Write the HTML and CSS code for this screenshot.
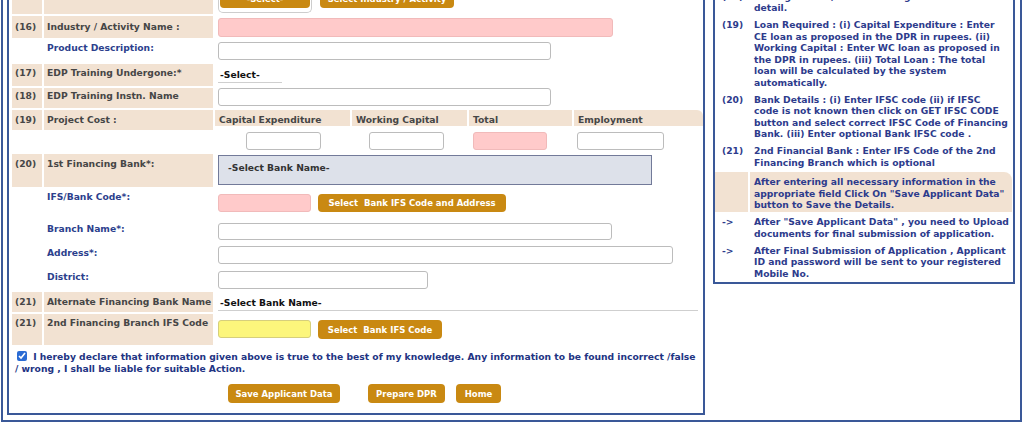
FILE: index.html
```html
<!DOCTYPE html>
<html lang="en">
<head>
    <meta charset="UTF-8">
    <meta name="viewport" content="width=device-width, initial-scale=1.0">
    <title>Applicant Data</title>
    <link rel="stylesheet" href="styles.css">
</head>
<body>
    <div class="frame">
        <!-- Form kiri -->
        <div class="form-panel">
            <div class="row row-top">
                <div class="num shade"></div>
                <div class="label shade"></div>
                <div class="field">
                    <span class="select-wrap"><button class="btn btn-select">-Select-</button></span>
                    <button class="btn btn-activity">Select Industry / Activity</button>
                </div>
            </div>

            <div class="row row-industry">
                <div class="num shade">(16)</div>
                <div class="label shade">Industry / Activity Name :</div>
                <div class="field"><input type="text" class="input input-pink w-industry"></div>
            </div>

            <div class="row row-desc">
                <div class="num"></div>
                <div class="label label-blue">Product Description:</div>
                <div class="field"><input type="text" class="input w-desc"></div>
            </div>

            <div class="row row-edp">
                <div class="num shade">(17)</div>
                <div class="label shade">EDP Training Undergone:*</div>
                <div class="field"><span class="select-plain">-Select-</span></div>
            </div>

            <div class="row row-instn">
                <div class="num shade">(18)</div>
                <div class="label shade">EDP Training Instn. Name</div>
                <div class="field"><input type="text" class="input w-desc"></div>
            </div>

            <div class="row row-cost">
                <div class="num shade">(19)</div>
                <div class="label shade">Project Cost :</div>
                <div class="field cost-grid">
                    <div class="cost-head">Capital Expenditure</div>
                    <div class="cost-head">Working Capital</div>
                    <div class="cost-head">Total</div>
                    <div class="cost-head cost-last">Employment</div>
                </div>
            </div>

            <div class="row row-cost-input">
                <div class="num"></div>
                <div class="label"></div>
                <div class="field cost-grid">
                    <input type="text" class="input cost-ce">
                    <input type="text" class="input cost-wc">
                    <input type="text" class="input input-pink cost-total">
                    <input type="text" class="input cost-emp">
                </div>
            </div>

            <div class="row row-bank">
                <div class="num shade">(20)</div>
                <div class="label shade">1st Financing Bank*:</div>
                <div class="field"><div class="select-box">-Select Bank Name-</div></div>
            </div>

            <div class="row row-ifs">
                <div class="num"></div>
                <div class="label label-blue">IFS/Bank Code*:</div>
                <div class="field">
                    <input type="text" class="input input-pink w-code">
                    <button class="btn btn-ifs-address">Select&nbsp; Bank IFS Code and Address</button>
                </div>
            </div>

            <div class="row row-branch">
                <div class="num"></div>
                <div class="label label-blue">Branch Name*:</div>
                <div class="field"><input type="text" class="input w-branch"></div>
            </div>

            <div class="row row-address">
                <div class="num"></div>
                <div class="label label-blue">Address*:</div>
                <div class="field"><input type="text" class="input w-address"></div>
            </div>

            <div class="row row-district">
                <div class="num"></div>
                <div class="label label-blue">District:</div>
                <div class="field"><input type="text" class="input w-district"></div>
            </div>

            <div class="row row-alt">
                <div class="num shade">(21)</div>
                <div class="label shade">Alternate Financing Bank Name</div>
                <div class="field"><span class="select-plain select-line">-Select Bank Name-</span></div>
            </div>

            <div class="row row-second">
                <div class="num shade">(21)</div>
                <div class="label shade">2nd Financing Branch IFS Code</div>
                <div class="field">
                    <input type="text" class="input input-yellow w-code">
                    <button class="btn btn-ifs">Select&nbsp; Bank IFS Code</button>
                </div>
            </div>

            <p class="declare">
                <input type="checkbox" checked> I hereby declare that information given above is true to the best of my knowledge. Any information to be found incorrect /false<br>/ wrong , I shall be liable for suitable Action.
            </p>

            <div class="actions">
                <button class="btn btn-save">Save Applicant Data</button>
                <button class="btn btn-dpr">Prepare DPR</button>
                <button class="btn btn-home">Home</button>
            </div>
        </div>

        <!-- Petunjuk kanan -->
        <div class="info-panel">
            <div class="info-num">(18)</div>
            <div class="info-text">undergone Yes, enter Training Institute Name in<br>detail.</div>

            <div class="info-num">(19)</div>
            <div class="info-text">Loan Required : (i) Capital Expenditure : Enter<br>CE loan as proposed in the DPR in rupees. (ii)<br>Working Capital : Enter WC loan as proposed in<br>the DPR in rupees. (iii) Total Loan : The total<br>loan will be calculated by the system<br>automatically.</div>

            <div class="info-num">(20)</div>
            <div class="info-text">Bank Details : (i) Enter IFSC code (ii) if IFSC<br>code is not known then click on GET IFSC CODE<br>button and select correct IFSC Code of Financing<br>Bank. (iii) Enter optional Bank IFSC code .</div>

            <div class="info-num">(21)</div>
            <div class="info-text">2nd Financial Bank : Enter IFS Code of the 2nd<br>Financing Branch which is optional</div>

            <div class="info-num info-shade"></div>
            <div class="info-text info-shade info-shade-end">After entering all necessary information in the<br>appropriate field Click On "Save Applicant Data"<br>button to Save the Details.</div>

            <div class="info-num">-&gt;</div>
            <div class="info-text">After "Save Applicant Data" , you need to Upload<br>documents for final submission of application.</div>

            <div class="info-num">-&gt;</div>
            <div class="info-text">After Final Submission of Application , Applicant<br>ID and password will be sent to your registered<br>Mobile No.</div>
        </div>
    </div>
</body>
</html>
```

FILE: styles.css
```css
/* Reset */
* {
    margin: 0;
    padding: 0;
    box-sizing: border-box;
}

body {
    font-family: "DejaVu Sans", Verdana, sans-serif;
    font-size: 9.2px;
    font-weight: bold;
    color: #464646;
    background: #fff;
    overflow: hidden;
}

/* Bingkai luar */
.frame {
    display: flex;
    align-items: flex-start;
    gap: 8px;
    width: 1021px;
    margin: -30px 0 0 1px;
    padding: 4px 5px 5px 4px;
    border: 2px solid #3a5898;
}

.form-panel {
    width: 698px;
    display: flex;
    flex-direction: column;
    gap: 2px;
    padding: 10px 0 10px 3px;
    border: 2px solid #3a5898;
}

/* Baris form */
.row {
    --lp: 3px;
    --fp: 2px;
    display: grid;
    grid-template-columns: 30px 169px 1fr;
    column-gap: 2px;
    height: 22px;
    line-height: 12px;
}

.num,
.label {
    padding: var(--lp) 0 0 3px;
    white-space: nowrap;
}

.field {
    display: flex;
    align-items: flex-start;
    gap: 7px;
    padding: var(--fp) 0 0 3px;
}

.shade {
    background: #f2e2d2;
}

.label-blue {
    color: #2c3f8d;
}

.row-top { height: 26px; --fp: 0px; gap: 2px 2px; }
.row-industry { --lp: 5px; }
.row-desc { --lp: 2px; }
.row-edp { --fp: 4px; }
.row-instn { height: 20px; --lp: 2px; --fp: 0px; }
.row-cost { height: 20px; --lp: 3.5px; }
.row-cost-input { height: 20px; }
.row-bank { height: 33px; --lp: 4px; --fp: 1px; }
.row-ifs { height: 28px; --lp: 2px; --fp: 5px; }
.row-branch { height: 23px; --lp: 4px; --fp: 4px; }
.row-district { --fp: 3px; }
.row-alt { height: 20px; --lp: 4px; --fp: 4px; }
.row-second { height: 31px; --fp: 6px; }

/* Isian */
.input {
    display: block;
    height: 18px;
    font: inherit;
    background: #fff;
    border: 1px solid #bcbcbc;
    border-radius: 3px;
}

.input-pink {
    background: #ffcaca;
    border-color: #f1baba;
}

.input-yellow {
    background: #fcf67c;
    border-color: #d6cf7c;
}

.w-industry { width: 395px; height: 19px; }
.w-desc { width: 333px; }
.w-code { width: 93px; }
.w-branch { width: 394px; height: 17px; }
.w-address { width: 455px; }
.w-district { width: 210px; }

.select-plain {
    display: block;
    width: 64px;
    height: 15px;
    padding-left: 2px;
    line-height: 14px;
    color: #111;
    border-bottom: 1px solid #cfcfcf;
}

.select-line {
    width: 480px;
}

.select-box {
    width: 434px;
    height: 30px;
    padding-left: 9px;
    line-height: 24px;
    color: #333;
    background: #dde1ea;
    border: 1px solid #727a99;
}

/* Biaya proyek */
.cost-grid {
    display: grid;
    grid-template-columns: 135px 115px 103px 1fr;
    column-gap: 2px;
    padding: 0;
}

.cost-head {
    padding: var(--lp) 0 0 4px;
    background: #f2e2d2;
}

.cost-last {
    border-top-right-radius: 6px;
}

.cost-ce { width: 75px; margin-left: 31px; }
.cost-wc { width: 75px; margin-left: 17px; }
.cost-total { width: 74px; margin-left: 4px; }
.cost-emp { width: 87px; margin-left: 3px; }

/* Tombol */
.btn {
    height: 18px;
    padding: 0;
    font: bold 8.5px "DejaVu Sans", Verdana, sans-serif;
    color: #fff;
    background: #c98912;
    border: 0;
    border-radius: 4px;
}

.select-wrap {
    display: block;
    padding: 1px 1px 4px;
    border: 1px solid #cdcdcd;
    border-top: 0;
    border-radius: 0 0 5px 5px;
    margin-top: 1px;
}

.btn-select { display: block; width: 90px; }
.btn-activity { width: 134px; margin-top: 2px; margin-left: 1px; }
.btn-ifs-address { width: 188px; }
.btn-ifs { width: 124px; height: 19px; }

.declare {
    margin-top: 4px;
    padding-left: 3px;
    line-height: 12px;
    color: #223483;
    white-space: nowrap;
}

.declare input {
    width: 10px;
    height: 10px;
    margin: 0 3px 0 2px;
    vertical-align: -1px;
    accent-color: #2b6cd4;
}

.actions {
    display: flex;
    margin-top: 7px;
    padding-left: 216px;
}

.actions .btn {
    height: 19px;
}

.btn-save { width: 112px; }
.btn-dpr { width: 77px; margin-left: 28px; }
.btn-home { width: 45px; margin-left: 11px; }

/* Panel petunjuk */
.info-panel {
    width: 302px;
    display: grid;
    grid-template-columns: 33px 1fr;
    column-gap: 2px;
    row-gap: 5.5px;
    padding: 12.75px 0 2.75px;
    line-height: 11.5px;
    color: #2d3b8c;
    border: 2px solid #3a5898;
}

.info-num {
    padding-left: 7px;
}

.info-text {
    padding-left: 4px;
    white-space: nowrap;
}

.info-shade {
    margin: -1.5px 0;
    padding-top: 4px;
    padding-bottom: 1.5px;
    background: #f2e2d2;
}

.info-shade-end {
    margin-right: 1px;
    border-top-right-radius: 8px;
}
```
